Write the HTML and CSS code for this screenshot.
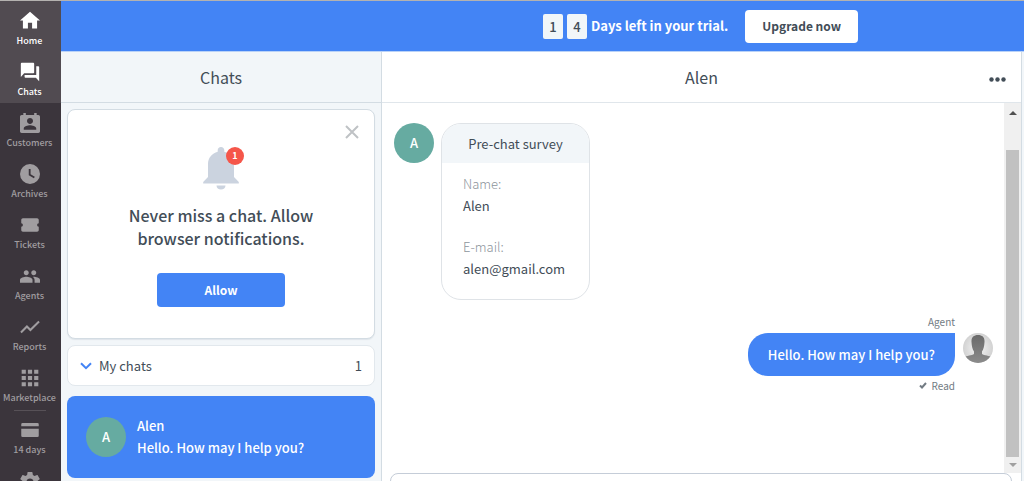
FILE: index.html
```html
<!DOCTYPE html>
<html lang="en">
<head>
<meta charset="utf-8">
<title>Chats</title>
<link rel="stylesheet" href="styles.css">
</head>
<body>
<div class="app">
  <nav class="sidebar" aria-label="Main">
    <a class="nav-item active" href="#home">
      <svg class="nav-icon" viewBox="0 0 24 24"><path d="M9.500 21v-7h5v7h6v-9.500h3.500L12 1 0 11.500h3.500V21z"/></svg>
      <span>Home</span>
    </a>
    <a class="nav-item active" href="#chats">
      <svg class="nav-icon" viewBox="0 0 24 24"><path d="M22 5h-2.500v10.500H5.500V18c0 .6.500 1 1 1h12.500l4 4V6c0-.55-.45-1-1-1zm-5 7.500V2c0-.55-.45-1-1-1H2c-.55 0-1 .45-1 1v16l4-4.500h11c.55 0 1-.45 1-1z"/></svg>
      <span>Chats</span>
    </a>
    <a class="nav-item" href="#customers">
      <svg class="nav-icon" viewBox="0 0 24 24"><path d="M22 2.500h-2V0h-3v2.500H7V0H4v2.500H2c-1.100 0-2 .9-2 2V22c0 1.100.9 2 2 2h20c1.100 0 2-.9 2-2V4.500c0-1.100-.9-2-2-2zM12 6c1.900 0 3.600 1.600 3.600 3.600S13.900 13.200 12 13.200s-3.600-1.600-3.600-3.600S10.100 6 12 6zm7.500 14h-15v-1.500c0-2.500 5-3.900 7.500-3.900s7.500 1.400 7.500 3.900z"/></svg>
      <span>Customers</span>
    </a>
    <a class="nav-item" href="#archives">
      <svg class="nav-icon" viewBox="0 0 24 24"><path fill-rule="evenodd" d="M12 0a12 12 0 1 0 0 24 12 12 0 0 0 0-24zM10.500 6h2.200v6.300l5.100 3-1.100 1.800-6.200-3.700z"/></svg>
      <span>Archives</span>
    </a>
    <a class="nav-item" href="#tickets">
      <svg class="nav-icon" viewBox="0 0 24 24"><path d="M22.500 10V6c0-1.100-.9-2-2-2h-17c-1.100 0-2 .9-2 2v4a2 2 0 0 1 0 4v4c0 1.100.9 2 2 2h17c1.100 0 2-.9 2-2v-4a2 2 0 0 1 0-4z"/></svg>
      <span>Tickets</span>
    </a>
    <a class="nav-item" href="#agents">
      <svg class="nav-icon" viewBox="0 0 24 24"><path d="M16.500 11c1.700 0 3-1.300 3-3s-1.300-3-3-3-3 1.300-3 3 1.300 3 3 3zm-9 0c1.700 0 3-1.300 3-3s-1.300-3-3-3-3 1.300-3 3 1.300 3 3 3zm0 2C5 13 0 14.200 0 16.700V20h15v-3.300C15 14.200 10 13 7.500 13zm9 0c-.3 0-.7 0-1 .1 1.200.8 2 2 2 3.600V20H24v-3.300c0-2.500-5-3.700-7.500-3.700z"/></svg>
      <span>Agents</span>
    </a>
    <a class="nav-item" href="#reports">
      <svg class="nav-icon" viewBox="0 0 24 24"><path d="m2 19.500-1.700-1.700L8.300 9.700l4.200 4.200L22 4.500 23.700 6.200 12.500 17.500l-4.200-4.200z"/></svg>
      <span>Reports</span>
    </a>
    <a class="nav-item" href="#marketplace">
      <svg class="nav-icon" viewBox="0 0 24 24"><path d="M2 2h5v5H2zM9.500 2h5v5h-5zM17 2h5v5h-5zM2 9.500h5v5H2zM9.500 9.500h5v5h-5zM17 9.500h5v5h-5zM2 17h5v5H2zM9.500 17h5v5h-5zM17 17h5v5h-5z"/></svg>
      <span>Marketplace</span>
    </a>
    <a class="nav-item trial" href="#billing">
      <svg class="nav-icon" viewBox="0 0 24 24"><path d="M3 3.500h18A1.500 1.500 0 0 1 22.500 5v2.500h-21V5A1.500 1.500 0 0 1 3 3.500zM1.500 10.500h21V19a1.500 1.500 0 0 1-1.500 1.500H3A1.500 1.500 0 0 1 1.500 19z"/></svg>
      <span>14 days</span>
    </a>
    <a class="nav-item" href="#settings" aria-label="Settings">
      <svg class="nav-icon" viewBox="2 2 20 20"><path d="M19.430 12.980c.04-.32.070-.64.070-.98s-.03-.66-.07-.98l2.110-1.650c.19-.15.240-.42.120-.64l-2-3.460c-.12-.22-.39-.3-.61-.22l-2.490 1c-.52-.4-1.080-.73-1.690-.98l-.38-2.650A.49.490 0 0 0 14 2h-4c-.25 0-.46.180-.49.420l-.38 2.650c-.61.250-1.170.590-1.690.98l-2.490-1c-.23-.09-.49 0-.61.220l-2 3.460c-.13.220-.07.490.120.640l2.110 1.650c-.04.320-.07.650-.07.980s.03.660.070.980l-2.110 1.650c-.19.150-.24.420-.12.640l2 3.460c.12.220.39.300.61.220l2.490-1c.52.400 1.080.730 1.690.980l.38 2.650c.03.240.240.420.490.420h4c.25 0 .46-.18.490-.42l.38-2.650c.61-.25 1.170-.59 1.690-.98l2.490 1c.23.090.49 0 .61-.22l2-3.460c.12-.22.070-.49-.12-.64zM12 15.500a3.500 3.500 0 1 1 0-7 3.500 3.500 0 0 1 0 7z"/></svg>
    </a>
  </nav>

  <div class="main">
    <div class="banner">
      <span class="digit">1</span>
      <span class="digit">4</span>
      <span class="banner-text">Days left in your trial.</span>
      <button class="upgrade" type="button">Upgrade now</button>
    </div>

    <div class="columns">
      <section class="list">
        <h1 class="column-title">Chats</h1>
        <div class="list-body">
          <div class="notice">
            <button class="close" type="button" aria-label="Close">
              <svg viewBox="0 0 14 14"><path d="M1 1l12 12M13 1 1 13"/></svg>
            </button>
            <div class="bell">
              <svg viewBox="0 0 36 43"><path d="M18 0c2 0 3.300 1.500 3.300 3.300v1.500C27 6.300 31 11 31 17v13l4.800 5v1.500H.2V35L5 30V17C5 11 9 6.300 14.700 4.800V3.300C14.700 1.500 16 0 18 0zM13.500 38.500h9c0 2.500-2 4-4.500 4s-4.500-1.500-4.500-4z"/></svg>
              <span class="badge">1</span>
            </div>
            <p class="notice-text">Never miss a chat. Allow<br>browser notifications.</p>
            <button class="allow" type="button">Allow</button>
          </div>
          <button class="group" type="button">
            <svg viewBox="0 0 12 8"><path d="M1 1.200 6 6.200l5-5"/></svg>
            <span class="group-name">My chats</span>
            <span>1</span>
          </button>
          <a class="chat" href="#alen">
            <span class="avatar">A</span>
            <span class="chat-lines"><span>Alen</span><span>Hello. How may I help you?</span></span>
          </a>
        </div>
      </section>

      <section class="conversation">
        <header class="conversation-head">
          <h2 class="column-title">Alen</h2>
          <button class="more" type="button" aria-label="More">
            <svg viewBox="0 0 17 5"><circle cx="2.500" cy="2.500" r="2.200"/><circle cx="8.500" cy="2.500" r="2.200"/><circle cx="14.500" cy="2.500" r="2.200"/></svg>
          </button>
        </header>
        <div class="feed">
          <div class="messages">
            <div class="incoming">
              <span class="avatar">A</span>
              <div class="survey">
                <h3 class="survey-title">Pre-chat survey</h3>
                <dl class="survey-body">
                  <dt>Name:</dt><dd>Alen</dd>
                  <dt>E-mail:</dt><dd>alen@gmail.com</dd>
                </dl>
              </div>
            </div>
            <div class="outgoing">
              <div class="outgoing-text">
                <span class="meta">Agent</span>
                <p class="bubble">Hello. How may I help you?</p>
                <span class="meta read"><svg viewBox="0 0 8 7"><path d="M1 3.500 3 5.500 7 1"/></svg>Read</span>
              </div>
              <svg class="agent-photo" viewBox="0 0 30 30" role="img" aria-label="Agent">
                <defs>
                  <clipPath id="round"><circle cx="15" cy="15" r="15"/></clipPath>
                  <linearGradient id="shade" x1="0" y1="0" x2="0" y2="1"><stop offset="0" stop-color="#6a6a6a"/><stop offset="1" stop-color="#8c8c8c"/></linearGradient>
                  <radialGradient id="back"><stop offset="0" stop-color="#f6f6f6"/><stop offset="1" stop-color="#d2d2d2"/></radialGradient>
                </defs>
                <g clip-path="url(#round)">
                  <rect width="30" height="30" fill="url(#back)"/>
                  <path fill="url(#shade)" d="M15 2c4.500 0 6.800 2.500 6.500 7-.2 4-1 7.500-2.500 9.500v2.500c2 1.500 7.500 1.500 10 3.500v6H1v-6c2.500-2 8-2 10-3.500v-2.500C9.500 16.500 8.700 13 8.500 9 8.200 4.500 10.500 2 15 2z"/>
                </g>
              </svg>
            </div>
          </div>
          <div class="scrollbar" aria-hidden="true">
            <svg viewBox="0 0 8 4"><path fill="#505050" d="M0 4 4 0l4 4z"/></svg>
            <span class="thumb"></span>
            <svg viewBox="0 0 8 4"><path fill="#a0a0a0" d="m0 0 4 4 4-4z"/></svg>
          </div>
        </div>
        <div class="composer"><textarea aria-label="Message"></textarea></div>
      </section>
    </div>
  </div>
</div>
</body>
</html>
```

FILE: styles.css
```css
* { box-sizing: border-box; }

body {
  margin: 0;
  font: 13px/22px "Noto Sans CJK SC", "Open Sans", sans-serif;
  color: #424d57;
}

h1, h2, h3, p, dl, dd { margin: 0; font-weight: 400; }
button { font: inherit; color: inherit; border: 0; padding: 0; background: none; cursor: pointer; }
a { color: inherit; text-decoration: none; }
svg { display: block; }

.app {
  display: flex;
  height: 100vh;
  overflow: hidden;
  border-top: 1px solid #b4b2b0;
}

.sidebar { flex: none; width: 61px; background: #3b353c; color: #a09da0; overflow: hidden; }
.nav-item {
  display: flex;
  flex-direction: column;
  align-items: center;
  gap: 3px;
  height: 51px;
  padding: 10px 2px 0 0;
  font-size: 9px;
  line-height: 14px;
  font-weight: 500;
  white-space: nowrap;
}
.nav-item.active { background: #514b51; color: #fff; }
.nav-icon { width: 20px; height: 20px; fill: currentColor; }
.trial { height: 53px; padding-top: 1px; }
.trial::before { content: ""; width: 32px; border-top: 1px solid #575157; margin-bottom: 6px; }

.main { flex: 1; min-width: 0; display: flex; flex-direction: column; }
.banner {
  flex: none;
  display: flex;
  align-items: center;
  justify-content: center;
  gap: 4px;
  height: 51px;
  padding-left: 316px;
  background: #4384f5;
  border-bottom: 1px solid #b9d2f8;
  color: #fff;
  font-weight: 700;
}
.digit {
  width: 20px;
  border-radius: 2px;
  background: #f1f6f9;
  color: #424d57;
  text-align: center;
  line-height: 25px;
  font-weight: 500;
}
.upgrade {
  margin-left: 13px;
  padding: 0 17px;
  height: 33px;
  border-radius: 4px;
  background: #fff;
  color: #424d57;
  font-size: 12px;
}

.columns { flex: 1; min-height: 0; display: flex; padding-right: 2px; background: #f2f6f9; }
.list { flex: none; width: 321px; border-right: 1px solid #d3dce3; display: flex; flex-direction: column; }
.column-title {
  flex: 1 0 auto;
  height: 51px;
  line-height: 51px;
  font-size: 16px;
  text-align: center;
}
.list .column-title { flex: none; border-bottom: 1px solid #d3dce3; }
.list-body { display: flex; flex-direction: column; padding: 6px; }

.notice {
  position: relative;
  display: flex;
  flex-direction: column;
  align-items: center;
  height: 230px;
  padding-top: 37px;
  background: #fff;
  border: 1px solid #d3dce3;
  border-radius: 8px;
  box-shadow: 0 1px 1px #dfe5ea;
}
.close { position: absolute; top: 15px; right: 15px; }
.close svg { width: 14px; height: 14px; fill: none; stroke: #bfc2c5; stroke-width: 2; }
.bell { position: relative; }
.bell svg { width: 36px; height: 43px; fill: #cbd3df; }
.badge {
  position: absolute;
  top: 0;
  right: -5px;
  width: 18px;
  border-radius: 50%;
  background: #f5564a;
  color: #fff;
  font-size: 9px;
  line-height: 18px;
  font-weight: 700;
  text-align: center;
}
.notice-text { margin-top: 14px; font-size: 16px; line-height: 23px; font-weight: 500; text-align: center; }
.allow {
  width: 128px;
  height: 34px;
  margin-top: 23px;
  border-radius: 4px;
  background: #4384f5;
  color: #fff;
  font-size: 12px;
  font-weight: 700;
}

.group {
  display: flex;
  align-items: center;
  gap: 7px;
  height: 41px;
  margin-top: 6px;
  padding: 0 12px;
  border: 1px solid #e2e8ed;
  border-radius: 8px;
  background: #fff;
}
.group svg { width: 12px; height: 8px; fill: none; stroke: #4384f5; stroke-width: 2; }
.group-name { flex: 1; text-align: left; }

.chat {
  display: flex;
  align-items: center;
  gap: 11px;
  height: 82px;
  margin-top: 10px;
  padding: 0 19px;
  border-radius: 8px;
  background: #4384f5;
  color: #fff;
  font-weight: 500;
}
.chat-lines { display: flex; flex-direction: column; }
.avatar {
  flex: none;
  width: 40px;
  height: 40px;
  border-radius: 50%;
  background: #66aba1;
  color: #fff;
  line-height: 40px;
  font-weight: 500;
  text-align: center;
}

.conversation {
  flex: 1;
  min-width: 0;
  display: flex;
  flex-direction: column;
  background: #fff;
  border-right: 1px solid #d3dce3;
}
.conversation-head { position: relative; display: flex; border-bottom: 1px solid #e0e6eb; height: 51px; }
.more { position: absolute; right: 15px; top: 25px; }
.more svg { width: 17px; height: 5px; fill: #424d57; }

.feed { flex: 1; min-height: 0; display: flex; }
.messages { flex: 1; padding: 20px 11px 0 12px; }
.incoming { display: flex; gap: 7px; }
.survey { width: 149px; height: 177px; border: 1px solid #dfe3e7; border-radius: 20px; overflow: hidden; }
.survey-title { background: #f2f6f9; font-size: 13px; line-height: 39px; text-align: center; }
.survey-body { padding: 10px 21px; }
.survey-body dt { color: #8d959c; font-weight: 300; }
.survey-body dd { margin-bottom: 19px; }

.outgoing { display: flex; justify-content: flex-end; gap: 8px; margin-top: 12px; }
.outgoing-text { display: flex; flex-direction: column; align-items: flex-end; }
.meta { font-size: 10px; line-height: 19px; color: #727b83; }
.bubble {
  margin-top: 2px;
  padding: 0 20px;
  line-height: 43px;
  border-radius: 20px 0 20px 20px;
  background: #4384f5;
  color: #fff;
  font-weight: 500;
}
.read { display: flex; align-items: center; gap: 5px; }
.read svg { width: 8px; height: 7px; fill: none; stroke: #727b83; stroke-width: 2; }
.agent-photo { width: 30px; height: 30px; margin-top: 21px; }

.scrollbar {
  width: 17px;
  padding: 8px 0 6px;
  background: #f0f0f0;
  display: flex;
  flex-direction: column;
  align-items: center;
}
.scrollbar svg { width: 8px; height: 4px; }
.thumb { flex: 1; width: 13px; margin: 35px 0 6px; background: #c1c1c1; }

.composer { flex: none; height: 8px; padding: 0 9px 0 8px; }
.composer textarea {
  display: block;
  width: 100%;
  height: 60px;
  border: 1px solid #c5cdd8;
  border-radius: 8px;
  resize: none;
  background: #fff;
}
```
